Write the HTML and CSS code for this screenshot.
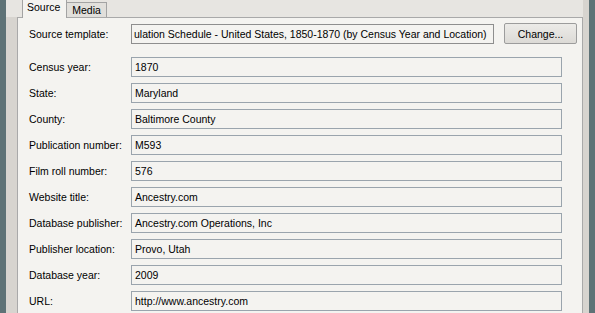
FILE: index.html
```html
<!DOCTYPE html>
<html lang="en">
<head>
  <meta charset="UTF-8" />
  <title>Edit Source</title>
  <link rel="stylesheet" href="styles.css">
</head>
<body>
  <div class="frame">
    <div class="dialog">
      <div class="tabbar">
        <div class="tab selected">Source</div>
        <div class="tab">Media</div>
      </div>

      <div class="panel">
        <div class="row top">
          <label>Source template:</label>
          <div class="box scrolled">ulation Schedule - United States, 1850-1870 (by Census Year and Location)</div>
          <button class="change">Change...</button>
        </div>

        <div class="fields">
          <div class="row"><label>Census year:</label><div class="box">1870</div></div>
          <div class="row"><label>State:</label><div class="box">Maryland</div></div>
          <div class="row"><label>County:</label><div class="box">Baltimore County</div></div>
          <div class="row"><label>Publication number:</label><div class="box">M593</div></div>
          <div class="row"><label>Film roll number:</label><div class="box">576</div></div>
          <div class="row"><label>Website title:</label><div class="box">Ancestry.com</div></div>
          <div class="row"><label>Database publisher:</label><div class="box">Ancestry.com Operations, Inc</div></div>
          <div class="row"><label>Publisher location:</label><div class="box">Provo, Utah</div></div>
          <div class="row"><label>Database year:</label><div class="box">2009</div></div>
          <div class="row"><label>URL:</label><div class="box">http://www.ancestry.com</div></div>
        </div>
      </div>
    </div>
  </div>
</body>
</html>
```

FILE: styles.css
```css
body {
  margin: 0;
  background-color: #5e7276;
  font-family: "Liberation Sans", Arial, sans-serif;
  font-size: 10.5px;
  color: #000;
  height: 313px;
  overflow: hidden;
}

.frame {
  margin: 0 6px 0 6px;
  height: 313px;
  background-color: #d7d4cf;
  padding: 0 6px 0 11px;
}

.dialog {
  display: flex;
  flex-direction: column;
  height: 100%;
}

.tabbar {
  display: flex;
  align-items: flex-end;
  height: 17px;
  background-color: #e7e5e1;
  margin-left: -11px;
  padding-left: 16px;
}

.tab {
  height: 14px;
  line-height: 14px;
  padding: 0 5px;
  border: 1px solid #a3a3a3;
  border-bottom: none;
  background-color: #e1dfdb;
}

.tab.selected {
  height: 18px;
  line-height: 15px;
  margin-bottom: -1px;
  padding: 0 6px 0 4px;
  background-color: #f4f3f0;
  position: relative;
  z-index: 1;
}

.tab + .tab {
  border-left: none;
}

.panel {
  flex: 1;
  background-color: #f4f3f0;
  border: 1px solid #a9a9a9;
  border-bottom: none;
  padding: 5px 0 0 11px;
}

.row {
  display: flex;
  align-items: center;
  height: 21px;
  padding-right: 20px;
}

.row.top {
  padding-right: 5px;
}

.row label {
  width: 102px;
  flex-shrink: 0;
}

.box {
  flex: 1;
  height: 18px;
  line-height: 18px;
  padding: 0 3px;
  border: 1px solid #9aa4ad;
  background-color: #f4f3f0;
  white-space: nowrap;
  overflow: hidden;
}

.box.scrolled {
  padding-left: 2px;
  border-color: #8e8e8e;
}

.change {
  width: 73px;
  height: 21px;
  margin-left: 10px;
  padding: 0;
  font-family: inherit;
  font-size: 10.5px;
  color: #000;
  border: 1px solid #9c9c9c;
  border-radius: 2px;
  background: linear-gradient(#ecebe8, #dcdad6);
}

.fields {
  display: flex;
  flex-direction: column;
  gap: 5px;
  margin-top: 12px;
}
```
